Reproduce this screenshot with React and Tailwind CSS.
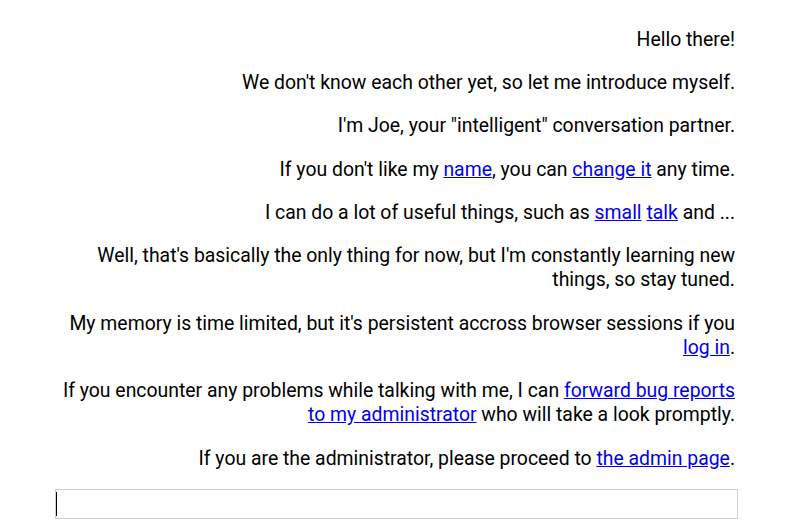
import { useEffect, useRef } from 'react'

const link = 'text-[#0000ee] underline'

export default function App() {
  const inputRef = useRef(null)

  useEffect(() => {
    inputRef.current?.focus()
  }, [])

  return (
    <div className="min-h-screen bg-white font-['Roboto',sans-serif] text-[19.4px] leading-[24px] text-black">
      <div className="ml-[55px] w-[683px] pt-[27.5px]">
        <div className="pr-[3px] text-right">
          <p className="mb-[19.4px]">Hello there!</p>
          <p className="mb-[19.4px]">We don't know each other yet, so let me introduce myself.</p>
          <p className="mb-[19.4px]">I'm Joe, your "intelligent" conversation partner.</p>
          <p className="mb-[19.4px]">
            If you don't like my <a className={link} href="#">name</a>, you can{' '}
            <a className={link} href="#">change it</a> any time.
          </p>
          <p className="mb-[19.4px]">
            I can do a lot of useful things, such as <a className={link} href="#">small</a>{' '}
            <a className={link} href="#">talk</a> and ...
          </p>
          <p className="mb-[19.4px]">
            Well, that's basically the only thing for now, but I'm constantly learning new things, so stay tuned.
          </p>
          <p className="mb-[19.4px]">
            My memory is time limited, but it's persistent accross browser sessions if you{' '}
            <a className={link} href="#">log in</a>.
          </p>
          <p className="mb-[19.4px]">
            If you encounter any problems while talking with me, I can{' '}
            <a className={link} href="#">forward bug reports to my administrator</a> who will take a look promptly.
          </p>
          <p>
            If you are the administrator, please proceed to <a className={link} href="#">the admin page</a>.
          </p>
        </div>
        <div className="relative mt-[18.5px]">
          <input
            ref={inputRef}
            autoFocus
            type="text"
            className="block h-[30px] w-full border border-[#cfcfcf] px-[1px] text-[19px] caret-transparent outline-none"
          />
          {/* blinking caret is not reliable in a still, so draw it */}
          <span className="pointer-events-none absolute left-[1px] top-[3px] h-[24px] w-px bg-black" />
        </div>
      </div>
    </div>
  )
}
